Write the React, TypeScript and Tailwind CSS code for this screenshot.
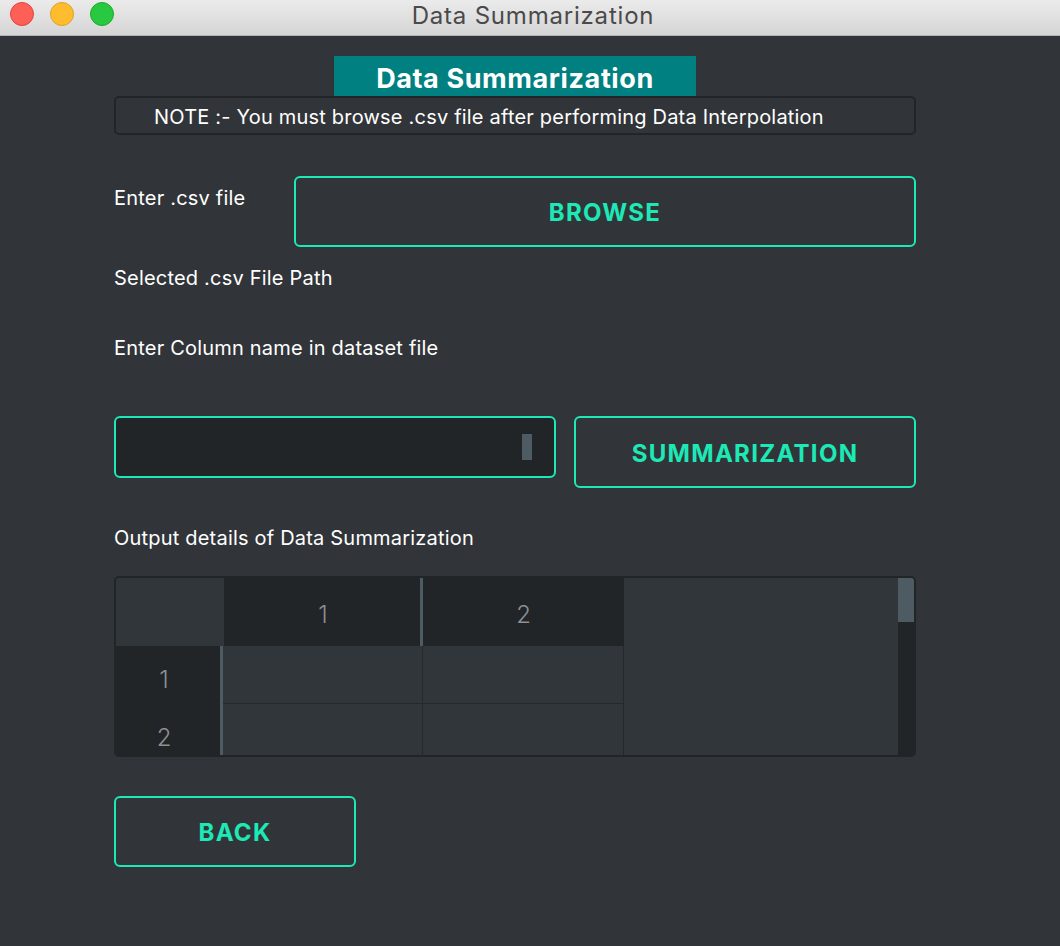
export default function App() {
  const font = { fontFamily: 'Inter, "Liberation Sans", Arial, sans-serif' };
  return (
    <div className="w-[1060px] h-[946px] flex flex-col bg-[#313539] overflow-hidden" style={font}>
      {/* window title bar */}
      <div className="relative h-[36px] shrink-0 flex items-center justify-center bg-gradient-to-b from-[#ebebeb] to-[#d5d5d5] border-b border-[#b4b4b4]">
        <div className="absolute left-[10px] top-[2px] flex gap-[16px]">
          <span className="w-[24px] h-[24px] rounded-full bg-[#fe5f57] border border-[#e0443e]" />
          <span className="w-[24px] h-[24px] rounded-full bg-[#febc2e] border border-[#dea123]" />
          <span className="w-[24px] h-[24px] rounded-full bg-[#28c840] border border-[#1aab29]" />
        </div>
        <span className="text-[24px] tracking-[0.8px] text-[#4a4a4a] leading-none pb-[4px] pl-[6px]">Data Summarization</span>
      </div>

      {/* content */}
      <div className="flex-1 flex flex-col pl-[114px] w-[916px] box-content">
        <div className="mt-[20px] ml-[220px] w-[362px] h-[40px] bg-[#008080] flex items-center justify-center">
          <span className="text-white font-bold text-[27px] tracking-[0.6px] leading-none pt-[4px]">Data Summarization</span>
        </div>
        <div className="h-[39px] w-[802px] border-2 border-[#222528] rounded-[5px] flex items-center pl-[38px]">
          <span className="text-white text-[20px] tracking-[0.2px] leading-none pt-[2px]">NOTE :- You must browse .csv file after performing Data Interpolation</span>
        </div>

        <div className="mt-[41px] flex items-start">
          <div className="w-[180px] mt-[10px] text-white text-[20px] tracking-[0.2px] leading-[24px]">Enter .csv file</div>
          <button className="w-[622px] h-[71px] border-2 border-[#1de9b6] rounded-[6px] text-[#1de9b6] font-bold text-[24px] tracking-[1.3px] pt-[3px]">
            BROWSE
          </button>
        </div>

        <div className="mt-[19px] text-white text-[20px] tracking-[0.2px] leading-[24px]">Selected .csv File Path</div>
        <div className="mt-[46px] text-white text-[20px] tracking-[0.2px] leading-[24px]">Enter Column name in dataset file</div>

        <div className="mt-[56px] flex items-start gap-[18px]">
          <div className="w-[442px] h-[62px] bg-[#222528] border-2 border-[#1de9b6] rounded-[6px] flex items-center justify-end pr-[22px]">
            <span className="w-[10px] h-[26px] bg-[#4f5b62]" />
          </div>
          <button className="w-[342px] h-[72px] border-2 border-[#1de9b6] rounded-[6px] text-[#1de9b6] font-bold text-[24px] tracking-[1.3px] pt-[3px]">
            SUMMARIZATION
          </button>
        </div>

        <div className="mt-[38px] text-white text-[20px] tracking-[0.2px] leading-[24px]">Output details of Data Summarization</div>

        {/* table */}
        <div className="mt-[26px] w-[802px] h-[181px] border-2 border-[#222528] rounded-[5px] flex overflow-hidden text-[#8b9094] text-[24px] font-light">
          <div className="flex-1 flex flex-col bg-[#31363b]">
            <div className="h-[70px] flex">
              <div className="w-[108px]" />
              <div className="w-[196px] bg-[#222528] flex items-center justify-center pl-[2px] pt-[5px]">1</div>
              <div className="w-[3px] bg-[#4f5b62]" />
              <div className="w-[201px] bg-[#222528] flex items-center justify-center pt-[5px]">2</div>
            </div>
            <div className="flex-1 flex">
              <div className="w-[104px] bg-[#222528] flex flex-col pr-[8px]">
                <div className="h-[58px] flex items-center justify-center pt-[10px]">1</div>
                <div className="h-[51px] flex items-center justify-center pt-[16px]">2</div>
              </div>
              <div className="w-[3px] bg-[#4f5b62]" />
              <div className="flex flex-col">
                <div className="h-[58px] flex border-b border-[#25292c]">
                  <div className="w-[200px] border-r border-[#25292c]" />
                  <div className="w-[201px] border-r border-[#25292c]" />
                </div>
                <div className="flex-1 flex">
                  <div className="w-[200px] border-r border-[#25292c]" />
                  <div className="w-[201px] border-r border-[#25292c]" />
                </div>
              </div>
            </div>
          </div>
          <div className="w-[16px] bg-[#222528] flex flex-col">
            <div className="h-[44px] bg-[#4f5b62]" />
          </div>
        </div>

        <button className="mt-[39px] w-[242px] h-[71px] border-2 border-[#1de9b6] rounded-[6px] text-[#1de9b6] font-bold text-[24px] tracking-[1.3px] pt-[3px]">
          BACK
        </button>
      </div>
    </div>
  );
}
